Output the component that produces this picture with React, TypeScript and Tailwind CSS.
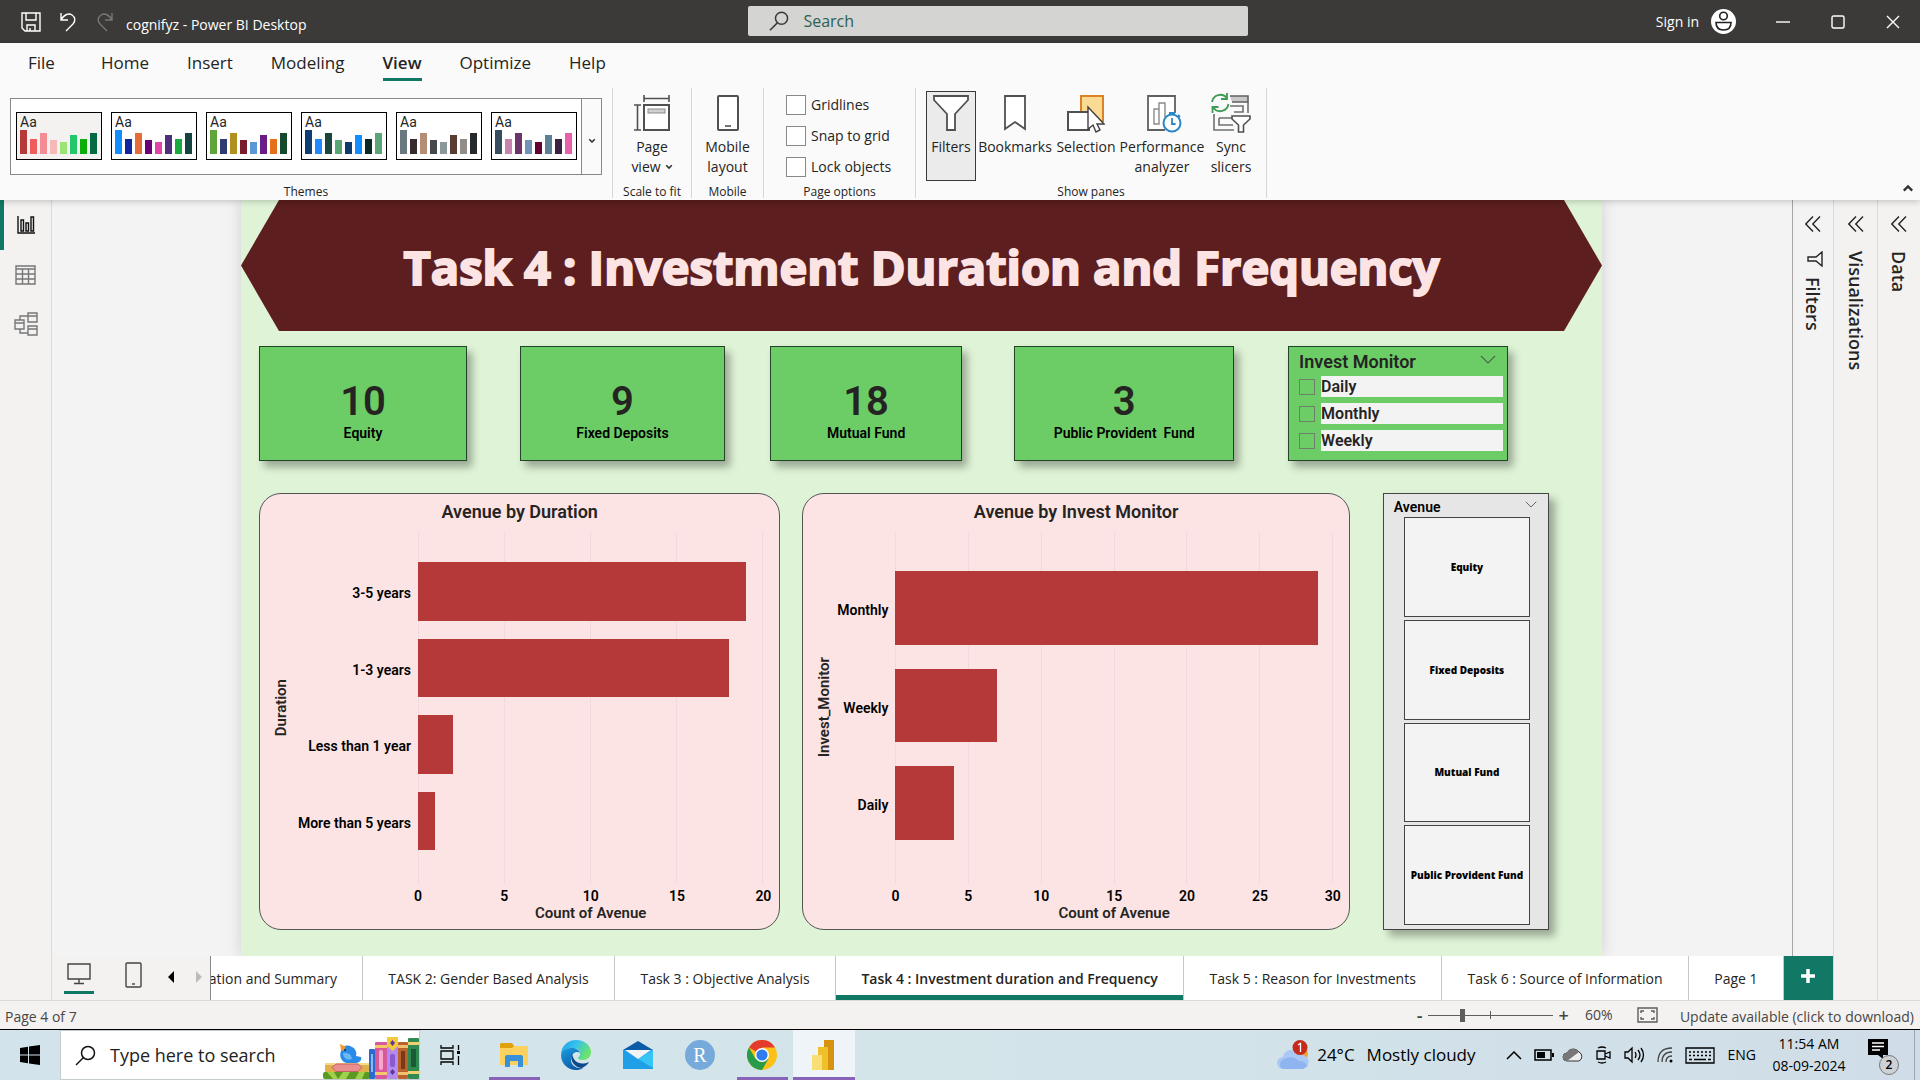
import { useState, type ReactNode } from "react";

/* ---------- data ---------- */

const menuTabs = ["File", "Home", "Insert", "Modeling", "View", "Optimize", "Help"];

const themes = [
  { name: "Current theme", paper: "#f3f2f1", bars: ["#b73a3a", "#f15b5b", "#f48c93", "#f8b8b8", "#9ae374", "#22c76c", "#0aad0a", "#046a42"] },
  { name: "Default", paper: "#ffffff", bars: ["#118dff", "#12239e", "#e66c37", "#6b007b", "#e044a7", "#4d2f7c", "#1aab40", "#15453f"] },
  { name: "City park", paper: "#ffffff", bars: ["#5fa53c", "#2f3c73", "#b0901f", "#7a1a2c", "#5b97d4", "#6b1b87", "#e66f1c", "#154a2e"] },
  { name: "Classroom", paper: "#ffffff", bars: ["#0f3e73", "#2188ff", "#1a463e", "#58a673", "#0d3b6e", "#118dff", "#0b2823", "#5aa576"] },
  { name: "Colorblind safe", paper: "#ffffff", bars: ["#6a797d", "#372b2c", "#b38e74", "#444a4c", "#8a979b", "#5a3c33", "#918e8a", "#26292a"] },
  { name: "Electric", paper: "#ffffff", bars: ["#364c5f", "#c784ae", "#6c3468", "#7094b8", "#650033", "#5d7f96", "#3b2044", "#e95fa9"] },
];
const themeBarHeights = [24, 15, 21, 14, 12, 19, 15, 21];

const cards = [
  { value: "10", label: "Equity", box: "flex-[208]" },
  { value: "9", label: "Fixed Deposits", box: "flex-[205] ml-[53px]" },
  { value: "18", label: "Mutual Fund", box: "flex-[192] ml-[45px]" },
  { value: "3", label: "Public Provident\u00a0 Fund", box: "flex-[220] ml-[52px]" },
];

const durationRows = [
  { label: "3-5 years", value: 19 },
  { label: "1-3 years", value: 18 },
  { label: "Less than 1 year", value: 2 },
  { label: "More than 5 years", value: 1 },
];
const monitorRows = [
  { label: "Monthly", value: 29 },
  { label: "Weekly", value: 7 },
  { label: "Daily", value: 4 },
];

const avenues = ["Equity", "Fixed Deposits", "Mutual Fund", "Public Provident Fund"];

const pages = [
  "TASK 2: Gender Based Analysis",
  "Task 3 : Objective Analysis",
  "Task 4 : Investment duration and Frequency",
  "Task 5 : Reason for Investments",
  "Task 6 : Source of Information",
  "Page 1",
];

/* ---------- small icons ---------- */

function ChevronDown({ className = "" }: { className?: string }) {
  return (
    <svg viewBox="0 0 16 9" className={className} fill="none" stroke="currentColor" strokeWidth="1.2" aria-hidden="true">
      <path d="M1 1l7 7 7-7" />
    </svg>
  );
}

function SmallChevron({ className = "" }: { className?: string }) {
  return (
    <svg viewBox="0 0 10 7" className={className} fill="none" stroke="#333" strokeWidth="2" aria-hidden="true">
      <path d="M1.5 1.5L5 5l3.5-3.5" />
    </svg>
  );
}

function DoubleChevron() {
  return (
    <svg width="16" height="16" viewBox="0 0 16 16" fill="none" stroke="#252423" strokeWidth="1.4" aria-hidden="true">
      <path d="M8 0.5L0.8 8 8 15.500M15 0.5L7.800 8 15 15.500" />
    </svg>
  );
}

function ThemeThumb({ paper, bars }: { paper: string; bars: string[] }) {
  return (
    <svg width="77" height="24" viewBox="0 0 77 24" aria-hidden="true" style={{ background: paper }}>
      {bars.map((color, i) => (
        <rect key={i} x={i * 10} y={24 - themeBarHeights[i]} width="7" height={themeBarHeights[i]} fill={color} />
      ))}
    </svg>
  );
}

const PageViewIcon = () => (
  <svg width="36" height="36" viewBox="0 0 36 36" fill="none" stroke="#505050" aria-hidden="true">
    <rect x="10" y="10" width="25" height="25" strokeWidth="2" fill="#fff" />
    <rect x="14" y="14" width="17" height="4" fill="#d0d0d0" stroke="#8a8a8a" />
    <path d="M10 0v7M35 0v7M10 3.500h25M0 10h7M0 35h7M3.500 10v25" strokeWidth="1.600" />
  </svg>
);
const MobileIcon = () => (
  <svg width="22" height="36" viewBox="0 0 22 36" fill="none" stroke="#505050" strokeWidth="2" aria-hidden="true">
    <rect x="1" y="1" width="20" height="34" rx="1" fill="#fff" />
    <path d="M8 31h6" strokeWidth="1.600" />
  </svg>
);
const FunnelIcon = () => (
  <svg width="36" height="36" viewBox="0 0 36 36" fill="#fff" stroke="#505050" strokeWidth="1.800" aria-hidden="true">
    <path d="M1 1h34v4L22 19v16h-8V19L1 5z" />
  </svg>
);
const BookmarkIcon = () => (
  <svg width="22" height="36" viewBox="0 0 22 36" fill="#fff" stroke="#505050" strokeWidth="1.800" aria-hidden="true">
    <path d="M1 1h20v33L11 27 1 34z" />
  </svg>
);
const SelectionIcon = () => (
  <svg width="38" height="38" viewBox="0 0 38 38" aria-hidden="true">
    <rect x="14" y="1" width="22" height="25" fill="#fbdb93" stroke="#d98324" strokeWidth="2" />
    <rect x="1" y="17" width="21" height="18" fill="#fff" stroke="#505050" strokeWidth="2" />
    <path d="M21 12v22l5-4 3 7 4-2-3-6h7z" fill="#fff" stroke="#404040" strokeWidth="1.400" />
  </svg>
);
const PerformanceIcon = () => (
  <svg width="36" height="38" viewBox="0 0 36 38" fill="none" className="ml-1" aria-hidden="true">
    <path d="M29 18V1H2v34h17" stroke="#606060" strokeWidth="1.800" fill="#fff" />
    <path d="M8 29V14h5v15zM13 29V8h6v14" stroke="#8a8a8a" strokeWidth="1.400" />
    <circle cx="26" cy="28" r="8.500" fill="#fff" stroke="#2b88c8" strokeWidth="2" />
    <path d="M26 23v6h3.500M23 18h6M26 18v2M32 20l2 2" stroke="#2b88c8" strokeWidth="1.800" />
  </svg>
);
const SyncIcon = () => (
  <svg width="42" height="40" viewBox="0 0 42 40" fill="none" className="-mt-[2px]" aria-hidden="true">
    <path d="M20 3h18v6H22" fill="#c8c8c8" stroke="#606060" strokeWidth="1.600" />
    <path d="M38 9v11M4 21v16h20M20 13h13v6h-9M9 25h13M9 25v7h14" stroke="#707070" strokeWidth="1.600" />
    <path d="M22 23h18v3l-6.500 6v7h-5v-7L22 26z" fill="#fff" stroke="#505050" strokeWidth="1.600" />
    <path d="M2 9A8.500 8.500 0 0117 5M17 0v6h-6M18.500 11a8.500 8.500 0 01-15 4M2.500 20v-6h6" stroke="#3f9a55" strokeWidth="1.800" />
  </svg>
);

/* ---------- title bar & ribbon ---------- */

function TitleBar() {
  return (
    <header className="grid h-[43px] grid-cols-[748fr_500px_672fr] items-center bg-[#3b3a38] text-white">
      <div className="flex items-center pl-[21px]">
        <button aria-label="Save" className="mr-[18px]">
          <svg width="20" height="20" viewBox="0 0 20 20" fill="none" stroke="#fff" strokeWidth="1.400">
            <path d="M1 1h18v18H4l-3-3zM5 1v7h10V1M6 19v-6h8v6M9 16v3" />
          </svg>
        </button>
        <button aria-label="Undo" className="mr-[17px]">
          <svg width="19" height="20" viewBox="0 0 19 20" fill="none" stroke="#fff" strokeWidth="1.400">
            <path d="M2 1v7h7M2 8c3-6 8-7 11-5 3 2 4 6 1 9l-7 7" />
          </svg>
        </button>
        <button aria-label="Redo" className="mr-3">
          <svg width="19" height="20" viewBox="0 0 19 20" fill="none" stroke="#777" strokeWidth="1.400">
            <path d="M17 1v7h-7M17 8C14 2 9 1 6 3 3 5 2 9 5 12l7 7" />
          </svg>
        </button>
        <span className="pt-[6px] text-sm whitespace-nowrap">cognifyz - Power BI Desktop</span>
      </div>
      <label className="-mt-px flex h-[30px] items-center rounded-xs bg-[#d4d4d2] pl-[21px]">
        <svg width="22" height="22" viewBox="0 0 22 22" fill="none" stroke="#3b3a38" strokeWidth="1.600" aria-hidden="true">
          <circle cx="13.500" cy="8" r="6.500" />
          <path d="M9 13l-8 8" />
        </svg>
        <input aria-label="Search" placeholder="Search" className="ml-[14px] w-full bg-transparent text-base outline-none placeholder:text-[#2c5f55]" />
      </label>
      <div className="flex items-center justify-end pr-5">
        <button className="flex items-center gap-3 text-sm">
          Sign in
          <svg width="25" height="25" viewBox="0 0 25 25" aria-hidden="true">
            <circle cx="12.500" cy="12.500" r="12.500" fill="#fff" />
            <circle cx="12.500" cy="7" r="3.800" fill="none" stroke="#222" strokeWidth="1.600" />
            <path d="M5 13.500h15c0 5-3 7.500-7.500 7.500S5 18.500 5 13.500z" fill="none" stroke="#222" strokeWidth="1.600" />
          </svg>
        </button>
        <button aria-label="Minimize" className="ml-10">
          <svg width="14" height="14" viewBox="0 0 14 14" stroke="#fff" strokeWidth="1.400"><path d="M0 7h14" /></svg>
        </button>
        <button aria-label="Maximize" className="ml-[41px]">
          <svg width="14" height="14" viewBox="0 0 14 14" fill="none" stroke="#fff" strokeWidth="1.400"><rect x="1" y="1" width="12" height="12" rx="1.500" /></svg>
        </button>
        <button aria-label="Close" className="ml-[41px]">
          <svg width="14" height="14" viewBox="0 0 14 14" stroke="#fff" strokeWidth="1.400"><path d="M1 1l12 12M13 1L1 13" /></svg>
        </button>
      </div>
    </header>
  );
}

function RibbonGroup({ label, className, children }: { label: string; className: string; children: ReactNode }) {
  return (
    <section aria-label={label} className={`flex flex-col border-r border-[#d6d6d6] ${className}`}>
      <div className="flex-1">{children}</div>
      <div className="h-4 text-center text-xs leading-5 whitespace-nowrap">{label}</div>
    </section>
  );
}

function RibbonButton({ icon, className = "w-full", children }: { icon: ReactNode; className?: string; children: ReactNode }) {
  return (
    <button className={`flex h-[90px] flex-col items-center border pt-[3px] text-sm leading-5 ${className}`}>
      <span className="mb-[5px] flex h-[37px] items-start justify-center">{icon}</span>
      {children}
    </button>
  );
}

function Ribbon() {
  const [tab, setTab] = useState("View");
  return (
    <div className="relative z-10 flex h-[157px] flex-col bg-[#fafafa] shadow-[0_2px_6px_rgba(0,0,0,0.18)]">
      <nav className="flex h-[45px] items-start gap-[38px] pl-7 pt-[5px]">
        {menuTabs.map((name) => (
          <button
            key={name}
            onClick={() => setTab(name)}
            className={`h-[33px] border-b-3 text-[17px] leading-[30px] first:mr-2 ${name === tab ? "border-[#117865] font-semibold" : "border-transparent"}`}
          >
            {name}
          </button>
        ))}
      </nav>
      <div className="flex h-[110px]">
        <RibbonGroup label="Themes" className="w-[613px]">
          <div className="ml-[10px] mt-[10px] flex h-[77px] w-[592px] border border-[#8a8886] bg-white">
            <div className="flex flex-1 items-start gap-[9px] pl-[5px] pt-[13px]">
              {themes.map((t) => (
                <button
                  key={t.name}
                  aria-label={t.name}
                  className="flex h-12 w-[86px] flex-col items-start border border-black pl-[3px] pt-px"
                  style={{ background: t.paper }}
                >
                  <span className="h-4 font-[Roboto,sans-serif] text-sm leading-4 text-[#252423]">Aa</span>
                  <ThemeThumb paper={t.paper} bars={t.bars} />
                </button>
              ))}
            </div>
            <button aria-label="More themes" className="flex w-5 items-center justify-center border-l border-[#8a8886] bg-[#fafafa] pt-2">
              <SmallChevron className="w-2" />
            </button>
          </div>
        </RibbonGroup>
        <RibbonGroup label="Scale to fit" className="w-[79px]">
          <RibbonButton icon={<PageViewIcon />} className="mt-[3px] w-full border-transparent">
            Page
            <span className="flex items-center gap-1">view <SmallChevron className="w-2" /></span>
          </RibbonButton>
        </RibbonGroup>
        <RibbonGroup label="Mobile" className="w-[72px]">
          <RibbonButton icon={<MobileIcon />} className="mt-[3px] w-full border-transparent">
            Mobile<span>layout</span>
          </RibbonButton>
        </RibbonGroup>
        <RibbonGroup label="Page options" className="w-[152px]">
          <div className="flex flex-col gap-[11px] pl-[22px] pt-[7px]">
            {["Gridlines", "Snap to grid", "Lock objects"].map((name) => (
              <label key={name} className="flex h-5 items-center gap-[5px] text-sm whitespace-nowrap">
                <input type="checkbox" className="size-5 appearance-none border border-[#8a8886] bg-white checked:bg-[#117865]" />
                {name}
              </label>
            ))}
          </div>
        </RibbonGroup>
        <RibbonGroup label="Show panes" className="w-[351px]">
          <div className="flex pl-[10px] pt-[3px]">
            <RibbonButton icon={<FunnelIcon />} className="w-[50px] border-[#3b3a38] bg-[#ebebeb]">Filters</RibbonButton>
            <RibbonButton icon={<BookmarkIcon />} className="w-[78px] border-transparent">Bookmarks</RibbonButton>
            <RibbonButton icon={<SelectionIcon />} className="w-16 border-transparent">Selection</RibbonButton>
            <RibbonButton icon={<PerformanceIcon />} className="w-[88px] border-transparent">Performance<span>analyzer</span></RibbonButton>
            <RibbonButton icon={<SyncIcon />} className="w-[50px] border-transparent">Sync<span>slicers</span></RibbonButton>
          </div>
        </RibbonGroup>
        <button aria-label="Collapse ribbon" className="mb-[6px] ml-auto mr-[6px] self-end">
          <SmallChevron className="w-3 rotate-180" />
        </button>
      </div>
    </div>
  );
}

/* ---------- report canvas ---------- */

function BarChart({
  title, yTitle, rows, max, labelBox, rowPad, plotPad,
}: {
  title: string; yTitle: string; rows: { label: string; value: number }[]; max: number; labelBox: string; rowPad: string; plotPad: string;
}) {
  const ticks = Array.from({ length: max / 5 + 1 }, (_, i) => i * 5);
  return (
    <figure className="flex h-full flex-col rounded-[22px] border border-[#555] bg-[#fce4e4] font-[Roboto,sans-serif] font-semibold text-[#252423]">
      <figcaption className="pt-1 text-center text-lg leading-7">{title}</figcaption>
      <div className="mt-[6px] flex h-[351px]">
        <div className="flex w-[42px] items-center justify-center">
          <span className="rotate-180 text-[15px] leading-5 [writing-mode:vertical-rl]">{yTitle}</span>
        </div>
        <div className={`flex flex-col text-right text-sm leading-5 text-black ${labelBox} ${plotPad}`}>
          {rows.map((r) => (
            <span key={r.label} className="flex flex-1 items-center justify-end pt-1 whitespace-nowrap">{r.label}</span>
          ))}
        </div>
        <div className="relative mr-4 flex-1">
          <div className="absolute inset-0 flex justify-between">
            {ticks.map((t) => (
              <span key={t} className="w-0 border-l border-dotted border-[#e6cfd6]" />
            ))}
          </div>
          <div className={`relative flex h-full flex-col ${plotPad}`}>
            {rows.map((r) => (
              <div key={r.label} className={`flex-1 ${rowPad}`}>
                <div className="h-full bg-[#b53939]" style={{ width: `${(r.value / max) * 100}%` }} />
              </div>
            ))}
          </div>
        </div>
      </div>
      <div className="flex">
        <div className="w-[42px]" />
        <div className={labelBox} />
        <div className="mr-4 flex-1">
          <div className="flex justify-between pt-1 text-sm leading-[18px] text-black">
            {ticks.map((t) => (
              <span key={t} className="flex w-0 justify-center">{t}</span>
            ))}
          </div>
          <div className="text-center text-[15px] leading-4">Count of Avenue</div>
        </div>
      </div>
    </figure>
  );
}

function Report() {
  return (
    <main className="ml-[189px] mr-[190px] min-w-0 flex-1 bg-[#dff4d6] shadow-[0_0_14px_rgba(0,0,0,0.15)]">
      <h1 className="flex h-[131px] items-center justify-center bg-[#5c1e1e] pt-1 text-[47px] font-bold whitespace-nowrap text-[#fce4e4] [-webkit-text-stroke:2px_#fce4e4] [clip-path:polygon(38px_0,calc(100%-38px)_0,100%_50%,calc(100%-38px)_100%,38px_100%,0_50%)]">
        Task 4 : Investment Duration and Frequency
      </h1>

      <div className="mt-[15px] flex h-[115px] pl-[18px] pr-[94px] font-[Roboto,sans-serif]">
        {cards.map((c) => (
          <article key={c.label} className={`border border-[#24442a] bg-[#6ccd66] shadow-[5px_6px_8px_rgba(0,0,0,0.32)] ${c.box}`}>
            <div className="flex flex-col items-center pt-[34px]">
              <strong className="text-[40px] leading-[42px] font-semibold text-[#252423]">{c.value}</strong>
              <span className="text-sm leading-5 font-semibold whitespace-nowrap text-black">{c.label}</span>
            </div>
          </article>
        ))}
        <section className="ml-[54px] flex-[220] border border-[#24442a] bg-[#6ccd66] shadow-[5px_6px_8px_rgba(0,0,0,0.32)]">
          <div className="flex h-[29px] items-center justify-between pl-[10px] pr-[11px] text-lg font-semibold text-[#252423]">
            Invest Monitor
            <ChevronDown className="mb-1 w-4 text-[#4a6b4a]" />
          </div>
          <div className="flex flex-col gap-[6px] pl-[10px] pr-1">
            {["Daily", "Monthly", "Weekly"].map((name) => (
              <label key={name} className="flex items-center gap-[6px]">
                <input type="checkbox" className="size-4 appearance-none border border-[#6f7f6c] checked:bg-[#252423]" />
                <span className="flex-1 bg-[#f3f3f3] text-base leading-[21px] font-semibold text-[#252423]">{name}</span>
              </label>
            ))}
          </div>
        </section>
      </div>

      <div className="mt-8 flex h-[437px] pl-[18px] pr-[53px]">
        <div className="flex-[521]">
          <BarChart title="Avenue by Duration" yTitle="Duration" rows={durationRows} max={20} labelBox="w-[116px] pr-[7px]" rowPad="py-[9px]" plotPad="pt-[21px] pb-6" />
        </div>
        <div className="ml-[22px] flex-[547]">
          <BarChart title="Avenue by Invest Monitor" yTitle="Invest_Monitor" rows={monitorRows} max={30} labelBox="w-[50px] pr-[7px]" rowPad="py-3" plotPad="pt-[27px] pb-[31px]" />
        </div>
        <div className="ml-[33px] flex-[166]">
          <section className="flex h-full flex-col border border-[#444] bg-[#e6e6e6] shadow-[6px_6px_8px_rgba(0,0,0,0.32)]">
            <div className="flex h-[23px] items-center justify-between pl-[10px] pr-[11px] pt-[2px] font-[Roboto,sans-serif] text-sm font-semibold text-black">
              Avenue
              <ChevronDown className="mb-1 w-3 text-[#555]" />
            </div>
            <div className="mb-1 ml-5 mr-[18px] flex flex-1 flex-col gap-[3px]">
              {avenues.map((name) => (
                <button key={name} className="flex-1 border border-[#444] bg-[#f3f3f3] pt-px text-[10px] font-extrabold whitespace-nowrap text-black">{name}</button>
              ))}
            </div>
          </section>
        </div>
      </div>
    </main>
  );
}

/* ---------- side rails ---------- */

function ViewRail() {
  return (
    <nav aria-label="Views" className="flex w-[52px] flex-col border-r border-[#dcdad8] bg-[#f3f2f1]">
      <button aria-label="Report view" className="flex h-[50px] items-center justify-center border-l-4 border-[#117865] pr-1">
        <svg width="18" height="18" viewBox="0 0 18 18" fill="none" stroke="#111" strokeWidth="1.400"><path d="M1 0v17h17M4 15V4h2.500v11zM9 15V7h2.500v8zM14 15V1h2.500v14z" /></svg>
      </button>
      <button aria-label="Table view" className="flex h-[49px] items-center justify-center">
        <svg width="21" height="20" viewBox="0 0 21 20" fill="none" stroke="#777" strokeWidth="1.400"><path d="M1 1h19v18H1zM1 4h19M1 9h19M1 14h19M7.500 4v15M13.500 4v15" /></svg>
      </button>
      <button aria-label="Model view" className="flex h-[50px] items-center justify-center">
        <svg width="24" height="24" viewBox="0 0 24 24" fill="none" stroke="#777" strokeWidth="1.400"><path d="M1 8h9v9H1zM1 11h9M14 1h9v9h-9zM14 4h9M14 14h9v9h-9zM14 17h9M6 8V4h8M6 17v4h8" /></svg>
      </button>
    </nav>
  );
}

function Pane({ name, className, icon }: { name: string; className: string; icon?: ReactNode }) {
  return (
    <aside className={`flex flex-col items-center pt-4 ${className}`}>
      <button aria-label={`Expand ${name}`} className="mb-[19px]"><DoubleChevron /></button>
      {icon}
      <h2 className="text-lg leading-6 font-semibold text-[#252423] [writing-mode:vertical-rl]">{name}</h2>
    </aside>
  );
}

/* ---------- bottom bars ---------- */

function PageTabs() {
  const [active, setActive] = useState(pages[2]);
  return (
    <div className="flex h-11 bg-white text-sm text-[#252423]">
      <div className="flex w-[159px] items-start border-r border-[#8a8886] bg-[#f3f2f1] pl-3">
        <button aria-label="Desktop layout" className="flex h-[38px] w-[30px] items-center justify-center border-b-3 border-[#117865]">
          <svg width="24" height="22" viewBox="0 0 24 22" fill="none" stroke="#444" strokeWidth="1.400"><path d="M1 1h22v15H1zM12 16v4M7 20.500h10" /></svg>
        </button>
        <button aria-label="Mobile layout" className="ml-[31px] mt-[6px]">
          <svg width="17" height="26" viewBox="0 0 17 26" fill="none" stroke="#444" strokeWidth="1.400"><rect x="1" y="1" width="15" height="24" rx="1" /><path d="M7 22h3" /></svg>
        </button>
        <button aria-label="Previous page" className="ml-[26px] mt-[15px]"><svg width="6" height="12" viewBox="0 0 6 12"><path d="M6 0v12L0 6z" /></svg></button>
        <button aria-label="Next page" className="ml-[22px] mt-[15px]"><svg width="6" height="12" viewBox="0 0 6 12" fill="#bbb"><path d="M0 0v12l6-6z" /></svg></button>
      </div>
      <button className="flex w-[152px] items-center justify-end overflow-hidden border-r border-[#c8c6c4] pr-[25px] pt-px whitespace-nowrap">ation and Summary</button>
      {pages.map((p) => (
        <button
          key={p}
          onClick={() => setActive(p)}
          className={`flex-auto border-r border-[#c8c6c4] px-5 pt-px whitespace-nowrap ${p === active ? "font-semibold shadow-[inset_0_-5px_#117865]" : ""}`}
        >
          {p}
        </button>
      ))}
      <button aria-label="New page" className="flex w-[49px] shrink-0 items-center justify-center bg-[#117865] pb-1">
        <svg width="14" height="14" viewBox="0 0 14 14" stroke="#fff" strokeWidth="3.500"><path d="M7 0v14M0 7h14" /></svg>
      </button>
    </div>
  );
}

function StatusBar() {
  return (
    <footer className="flex h-[30px] items-center border-t border-b border-t-[#dcdad8] border-b-black bg-[#f3f2f1] pl-[5px] pr-[6px] text-sm text-[#484644]">
      <span className="pt-1">Page 4 of 7</span>
      <button aria-label="Zoom out" className="ml-auto text-lg leading-6 font-semibold">-</button>
      <span className="relative ml-[5px] flex w-[125px] items-center">
        <span className="absolute left-[62px] h-2 w-px bg-[#605e5c]" />
        <input
          type="range"
          aria-label="Zoom"
          defaultValue={27}
          className="h-px w-full appearance-none bg-[#605e5c] [&::-webkit-slider-thumb]:h-[13px] [&::-webkit-slider-thumb]:w-[5px] [&::-webkit-slider-thumb]:appearance-none [&::-webkit-slider-thumb]:bg-[#605e5c]"
        />
      </span>
      <button aria-label="Zoom in" className="ml-[6px] text-lg leading-6 font-semibold">+</button>
      <span className="ml-4 w-[30px]">60%</span>
      <button aria-label="Fit to page" className="ml-[22px]">
        <svg width="21" height="16" viewBox="0 0 21 16" fill="none" stroke="#605e5c" strokeWidth="1.400"><path d="M1 1h19v14H1zM4 6V4h3M14 4h3v2M17 10v2h-3M7 12H4v-2" /></svg>
      </button>
      <a href="#update" className="ml-[22px] pt-1">Update available (click to download)</a>
    </footer>
  );
}

function BooksArt() {
  return (
    <svg width="96" height="43" viewBox="0 0 96 43" aria-hidden="true">
      <rect x="0" y="36" width="47" height="7" rx="2" fill="#5a9a20" />
      <path d="M4 36l6 7h5l-4-7zM20 36l-5 7h8l4-7zM36 36l-4 7h7l3-7z" fill="#9fd24a" />
      <rect x="2" y="27" width="44" height="9" rx="1" fill="#e2b04a" />
      <rect x="2" y="27" width="44" height="2" fill="#f6d98a" />
      <path d="M13 28h22l4 3.500-4 4H13l-4-4z" fill="#e98f8f" stroke="#c56060" />
      <path d="M18 15c1-5 6-7 11-4 4 2 5 6 4 9l5 1c1 3-1 5-4 6H24c-6-1-8-7-6-12z" fill="#2a8ae8" />
      <path d="M20 17c0 5 4 8 9 6-1-5-4-7-9-6z" fill="#6ab8f8" />
      <path d="M17 8l6 3-3 4-2-1z" fill="#f39a2a" />
      <circle cx="22" cy="14" r="1" fill="#0a2a5a" />
      <rect x="46" y="13" width="6" height="30" rx="1" fill="#2a6ad0" />
      <rect x="48" y="18" width="2" height="18" fill="#8ab8f8" />
      <rect x="52" y="6" width="12" height="37" rx="1" fill="#d8589c" />
      <path d="M52 9h12v3H52zM52 36h12v3H52z" fill="#f3c86a" />
      <rect x="56" y="14" width="4" height="20" rx="2" fill="#f5a8cc" />
      <rect x="64" y="1" width="11" height="42" rx="1" fill="#b48af0" />
      <path d="M64 1h11v9l-5.500 5L64 10z" fill="#f6c93a" />
      <path d="M69.500 4l2.500 3-2.500 3L67 7zM69.500 33l2.500 3-2.500 3L67 36z" fill="#5a3a9a" />
      <rect x="67" y="18" width="5" height="13" rx="2" fill="#8a5ad0" />
      <rect x="75" y="6" width="10" height="37" rx="1" fill="#b8622e" />
      <path d="M75 9h10v3H75zM75 36h10v3H75z" fill="#f0c070" />
      <rect x="78" y="15" width="4" height="18" fill="#7a3a1a" />
      <rect x="85" y="2" width="11" height="41" rx="1" fill="#2f8a52" />
      <path d="M85 6h11v3H85zM85 35h11v3H85z" fill="#f0d070" />
      <rect x="88" y="13" width="5" height="18" fill="#1a5a34" />
    </svg>
  );
}

function TaskIcon({ label, mark = "", children }: { label: string; mark?: string; children: ReactNode }) {
  return (
    <button aria-label={label} className={`flex h-full w-[62px] flex-col items-center pt-[10px] ${mark === "active" ? "bg-[#eef4f7]" : ""}`}>
      <span className="flex h-[30px] items-center">{children}</span>
      {mark && <span className={`mt-auto h-[3px] bg-[#8764b8] ${mark === "active" ? "w-full" : "w-[51px]"}`} />}
    </button>
  );
}

function Taskbar() {
  return (
    <div className="flex h-[50px] items-center bg-linear-to-r from-[#d3e3ec] via-[#d3e5e9] to-[#d0dde8] text-black">
      <button aria-label="Start" className="flex w-[60px] justify-center">
        <svg width="20" height="20" viewBox="0 0 20 20"><path d="M0 3l8-1.200V9.500H0zM9 1.600L20 0v9.500H9zM0 10.500h8v7.700L0 17zM9 10.500h11V20L9 18.400z" /></svg>
      </button>
      <label className="flex h-full w-[360px] items-center border border-[#c5ccd0] bg-white pl-[14px]">
        <svg width="21" height="21" viewBox="0 0 21 21" fill="none" stroke="#111" strokeWidth="1.500" aria-hidden="true"><circle cx="13" cy="8" r="6.500" /><path d="M8.500 12.500L1 20" /></svg>
        <input aria-label="Type here to search" placeholder="Type here to search" className="ml-[14px] min-w-0 flex-1 text-lg outline-none placeholder:text-[#222]" />
        <span className="self-end"><BooksArt /></span>
      </label>
      <button aria-label="Task view" className="mr-[3px] flex w-[60px] justify-center">
        <svg width="20" height="20" viewBox="0 0 20 20" fill="none" stroke="#000" strokeWidth="1.300"><path d="M1 0v3h12V0M1 20v-3h12v3M1 6h12v8H1zM18.500 0v5M18.500 11v9" /><path d="M17 6h3v3h-3z" fill="#000" stroke="none" /></svg>
      </button>
      <TaskIcon label="File Explorer" mark="open">
        <svg width="28" height="26" viewBox="0 0 28 26"><path d="M0 3h12l3 1h13v19H0z" fill="#fcd15e" /><path d="M1 1h11l2 3-2 2H0V2z" fill="#e0a10c" /><path d="M5 25V15q0-2 2-2h14q2 0 2 2v10h-5v-6h-8v6z" fill="#3a90d8" /></svg>
      </TaskIcon>
      <TaskIcon label="Edge">
        <svg width="30" height="30" viewBox="0 0 30 30">
          <defs>
            <linearGradient id="edgeTop" x1="0" y1="0" x2="1" y2="0.4"><stop offset="0" stopColor="#1f9de0" /><stop offset="0.5" stopColor="#35c1f1" /><stop offset="1" stopColor="#6be36a" /></linearGradient>
            <linearGradient id="edgeBottom" x1="0" y1="0" x2="0.600" y2="1"><stop offset="0" stopColor="#1b9de2" /><stop offset="1" stopColor="#0c59a4" /></linearGradient>
          </defs>
          <path d="M0 15C0 6 7 0 15 0c9 0 15 6 15 12 0 5-4 8-8 8-3 0-5-1-5-2 0-1 2-1 2-4 0-4-3-6-7-6C6 8 1 11 0 15z" fill="url(#edgeTop)" />
          <path d="M0 15c1-5 6-7 11-7 4 0 7 2 8 5-2-2-8-1-9 5-1 7 5 11 12 10-2 1.500-4 2-7 2C6 30 0 23 0 15z" fill="url(#edgeBottom)" />
          <path d="M11 13c-3 8 3 15 10 15 4-2 6-4 7-6-9 4-16 0-17-9z" fill="#0c4a8c" />
        </svg>
      </TaskIcon>
      <TaskIcon label="Mail">
        <svg width="30" height="28" viewBox="0 0 30 28"><path d="M0 9L15 0l15 9v2H0z" fill="#0a5ca8" /><path d="M0 9h30v19H0z" fill="#1f9fe6" /><path d="M15 18l15-9v18z" fill="#38c5f6" /><path d="M2 9h26l-13 9z" fill="#f4f4f4" /></svg>
      </TaskIcon>
      <TaskIcon label="RStudio">
        <span className="flex size-[30px] items-center justify-center rounded-full bg-[#75aadb] font-['Liberation_Serif',serif] text-xl text-white">R</span>
      </TaskIcon>
      <TaskIcon label="Chrome" mark="open">
        <svg width="30" height="30" viewBox="0 0 30 30"><circle cx="15" cy="15" r="15" fill="#fbc116" /><path d="M15 15L2 7.500A15 15 0 0128 7.500H15z" fill="#e33b2e" /><path d="M2 7.500A15 15 0 0015 30l6.500-11.200L15 15 8.500 18.800z" fill="#2a9b48" /><circle cx="15" cy="15" r="7" fill="#fff" /><circle cx="15" cy="15" r="5.600" fill="#2f7cf0" /></svg>
      </TaskIcon>
      <TaskIcon label="Power BI Desktop" mark="active">
        <svg width="24" height="30" viewBox="0 0 24 30"><path d="M12 0h10v30H12z" fill="#d6930f" /><path d="M6 7h10v23H6z" fill="#efc02a" /><path d="M0 15h10v15H0z" fill="#f7df75" /></svg>
      </TaskIcon>

      <div className="ml-auto flex h-full items-center">
        <button className="flex items-center text-[17px] whitespace-nowrap">
          <svg width="32" height="30" viewBox="0 0 32 30" className="mr-2" aria-hidden="true">
            <circle cx="24" cy="14" r="7" fill="#f6a02a" />
            <path d="M6 29a6 6 0 010-12 9 9 0 0117-2 7 7 0 013 14z" fill="#a9c8f5" />
            <path d="M4 28a6 6 0 013-9 12 12 0 0115 2 7 7 0 018 5l-4 3H7z" fill="#7fa8ec" opacity="0.600" />
            <circle cx="23" cy="7.500" r="7.500" fill="#c42b1c" />
            <path d="M21 5l2.500-1.500V12" fill="none" stroke="#fff" strokeWidth="1.300" />
          </svg>
          24°C <span className="ml-3">Mostly cloudy</span>
        </button>
        <button aria-label="Show hidden icons" className="ml-[30px]"><svg width="16" height="9" viewBox="0 0 16 9" fill="none" stroke="#000" strokeWidth="1.500"><path d="M1 8l7-7 7 7" /></svg></button>
        <svg width="20" height="12" viewBox="0 0 20 12" className="ml-3" aria-label="Battery"><path d="M1 1h16v10H1z" fill="none" stroke="#000" strokeWidth="1.500" /><path d="M3 3h8v6H3zM18 4h2v4h-2z" /></svg>
        <svg width="22" height="14" viewBox="0 0 22 14" className="ml-2" aria-label="OneDrive"><path d="M5 13a4 4 0 010-8 7 7 0 0112-1 5 5 0 010 9z" fill="#eee" stroke="#333" /><path d="M5 13a4 4 0 010-8 7 7 0 0112-1z" fill="#777" /></svg>
        <svg width="16" height="18" viewBox="0 0 16 18" className="ml-3" fill="none" stroke="#000" strokeWidth="1.300" aria-label="Camera"><path d="M1 5h8v8H1zM9 8l5-2v6l-5-2M2 2q4-2 8 0M2 16q4 2 8 0" /></svg>
        <svg width="21" height="18" viewBox="0 0 21 18" className="ml-3" fill="none" stroke="#000" strokeWidth="1.300" aria-label="Volume"><path d="M1 6h3l4-4v14l-4-4H1zM11 6q2 3 0 6M14 4q4 5 0 10M17 2q5 7 0 14" /></svg>
        <svg width="16" height="16" viewBox="0 0 16 16" className="ml-3" fill="none" stroke="#444" strokeWidth="1.300" aria-label="Network"><path d="M1 15Q1 1 15 1M5 15Q5 5 15 5M9 15Q9 9 15 9" /><circle cx="14" cy="14" r="1.500" fill="#000" stroke="none" /></svg>
        <svg width="30" height="17" viewBox="0 0 30 17" className="ml-3" fill="none" stroke="#000" strokeWidth="1.300" aria-label="Touch keyboard"><path d="M1 1h28v15H1z" /><path d="M4 5h22M4 8.500h22" strokeDasharray="2 2" /><path d="M4 12.500h3M9 12.500h12M23 12.500h3" /></svg>
        <button className="ml-[13px] text-sm">ENG</button>
        <button className="ml-3 w-[82px] text-center text-sm leading-[22px]"><span className="block">11:54 AM</span><span className="block">08-09-2024</span></button>
        <button aria-label="2 notifications" className="relative ml-[18px] mr-[15px] h-8 w-[31px]">
          <svg width="20" height="20" viewBox="0 0 20 20" className="mb-3"><path d="M0 0h20v16h-5v4l-5-4H0z" /><path d="M4 4h12M4 7.500h12M4 11h8" stroke="#fff" strokeWidth="1.300" /></svg>
          <span className="absolute right-0 -bottom-1 flex size-5 items-center justify-center rounded-full border border-[#777] bg-[#ccd2d5] text-xs font-semibold">2</span>
        </button>
        <span className="h-full w-[6px] border-l border-[#9aa7b0]" />
      </div>
    </div>
  );
}

export default function App() {
  return (
    <div className="flex min-h-screen flex-col font-['Open_Sans',sans-serif] text-[#252423]">
      <TitleBar />
      <Ribbon />
      <div className="flex min-h-[800px] flex-1">
        <ViewRail />
        <div className="flex min-w-0 flex-1 flex-col">
          <div className="flex flex-1 overflow-hidden bg-[#f3f3f3]">
            <Report />
            <Pane
              name="Filters"
              className="w-[41px] border-l border-[#a8a6a4] bg-[#f3f3f3]"
              icon={
                <svg width="16" height="16" viewBox="0 0 16 16" className="mb-[10px] ml-1 shrink-0" fill="none" stroke="#252423" strokeWidth="1.400" aria-hidden="true">
                  <path d="M15 1v14l-6-5H1V6h8z" />
                </svg>
              }
            />
          </div>
          <PageTabs />
        </div>
        <Pane name="Visualizations" className="w-11 border-l border-[#dcdad8] bg-[#f3f2f1]" />
        <Pane name="Data" className="w-[43px] border-l border-[#dcdad8] bg-[#f3f2f1]" />
      </div>
      <StatusBar />
      <Taskbar />
    </div>
  );
}
